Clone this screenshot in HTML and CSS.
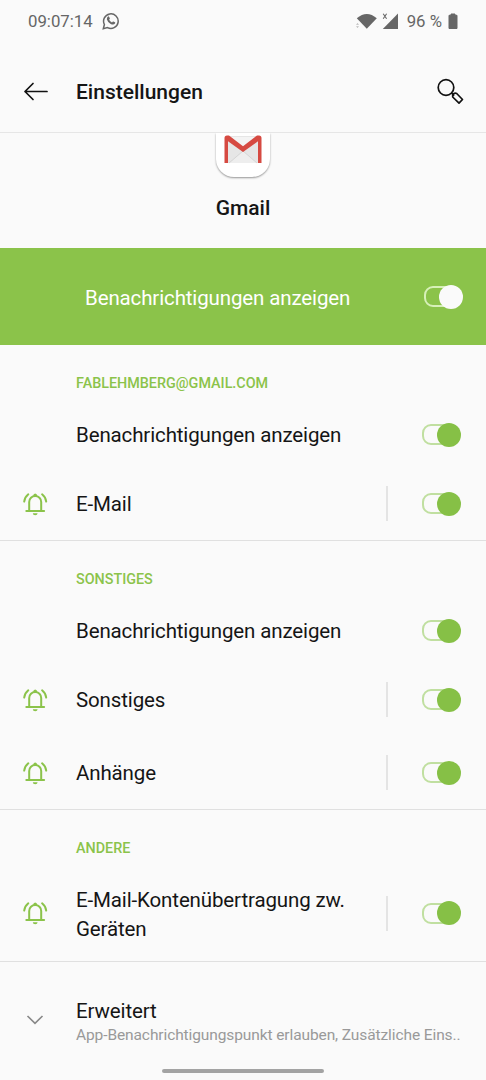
FILE: index.html
```html
<!DOCTYPE html>
<html lang="de">
<head>
  <meta charset="UTF-8" />
  <title>Einstellungen</title>
  <link rel="stylesheet" href="styles.css">
</head>
<body>
  <svg class="sprite">
    <symbol id="bell" viewBox="0 0 26 26">
      <g fill="none" stroke="currentColor" stroke-width="2" stroke-linecap="round">
        <path d="M4.300 20h17.800" />
        <path d="M7.200 19.500V11a6 6 0 0 1 12 0v8.500" />
        <path d="M6.300 3.300Q2.700 6.200 2.200 10.600" />
        <path d="M20.100 3.300Q23.700 6.200 24.200 10.600" />
      </g>
      <path d="M11.200 5a2 2.500 0 0 1 4 0zM10.800 22.200h4.800a2.400 2 0 0 1-4.800 0z" fill="currentColor" />
    </symbol>
  </svg>

  <div class="status-bar">
    <span class="clock">09:07:14</span>
    <svg class="whatsapp" width="18" height="18" viewBox="0 0 18 18">
      <path d="M1.300 16.700l1.100-4.200A7.300 7.300 0 1 1 5.500 15.600z" fill="none" stroke="#666" stroke-width="1.500" />
      <path d="M5.700 4.700q.9-.9 1.500.2l.7 1.600q0 .6-.8 1.300.9 1.800 2.900 2.600.9-1.200 1.400-.9l1.600.8q.5.400 0 1.200-1.400 1.900-4.300.4Q5.600 10.200 4.900 7.500q-.2-1.700.8-2.800z" fill="#666" />
    </svg>
    <div class="status-icons">
      <svg width="22" height="17" viewBox="0 0 22 17">
        <path d="M.8 5.200Q10.800-3.400 20.800 5.200L10.800 15.800z" fill="#666" />
        <path d="M0 11.700l1.500-1.700 1.500 1.700zM0 13.300l1.500 1.700 1.500-1.700z" fill="#bbb" />
      </svg>
      <svg width="17" height="17" viewBox="0 0 17 17">
        <path d="M16 .5V16H.8z" fill="#666" />
        <path d="M1.200.8l3.400 5M4.600.8l-3.400 5" stroke="#666" stroke-width="1.100" />
      </svg>
      <span class="percent">96 %</span>
      <svg width="10" height="17" viewBox="0 0 10 17">
        <path d="M3 1h4v1.300h2V15.500H1V2.300h2z" fill="#666" stroke="#666" stroke-linejoin="round" />
      </svg>
    </div>
  </div>

  <header class="toolbar">
    <svg width="26" height="20" viewBox="0 0 26 20" fill="none" stroke="#111" stroke-width="1.700" stroke-linecap="round" stroke-linejoin="round">
      <path d="M24 9.500H2M10 1.500L2 9.500l8 8" />
    </svg>
    <h1>Einstellungen</h1>
    <svg class="search" width="28" height="28" viewBox="0 0 28 28" fill="none" stroke="#111" stroke-width="1.700" stroke-linejoin="round">
      <circle cx="10" cy="9.500" r="7.800" />
      <path d="M15.500 15l2.700 2.700M16.700 19v-2.500q1.800-2.200 4-1l5.800 6-3.500 3.600z" />
    </svg>
  </header>

  <div class="app">
    <div class="app-icon">
      <svg width="38" height="29" viewBox="0 0 38 29">
        <path d="M2 1h34v27H2z" fill="#e6e6e6" />
        <path d="M5 28L19 16l14 12z" fill="#eee" />
        <path d="M4 2h30L19 14z" fill="#f4f4f4" />
        <path d="M5 28l14-12M33 28L19 16" stroke="#d5d5d5" fill="none" />
        <path d="M.5 3q0-2.500 2.500-2.500h2L19 11.300 33 .5h2q2.500 0 2.500 2.500v25H34V6.300L19 17 4 6.300V28H.5z" fill="#d64a42" />
      </svg>
    </div>
    <div class="app-name">Gmail</div>
  </div>

  <div class="banner">
    <span>Benachrichtigungen anzeigen</span>
    <div class="switch light"><i></i></div>
  </div>

  <section>
    <h2>FABLEHMBERG@GMAIL.COM</h2>
    <div class="row first">
      <span class="label">Benachrichtigungen anzeigen</span>
      <div class="switch"><i></i></div>
    </div>
    <div class="row">
      <svg class="bell"><use href="#bell" /></svg>
      <span class="label">E-Mail</span>
      <div class="separator"></div>
      <div class="switch"><i></i></div>
    </div>
  </section>

  <section>
    <h2>SONSTIGES</h2>
    <div class="row first">
      <span class="label">Benachrichtigungen anzeigen</span>
      <div class="switch"><i></i></div>
    </div>
    <div class="row">
      <svg class="bell"><use href="#bell" /></svg>
      <span class="label">Sonstiges</span>
      <div class="separator"></div>
      <div class="switch"><i></i></div>
    </div>
    <div class="row">
      <svg class="bell"><use href="#bell" /></svg>
      <span class="label">Anhänge</span>
      <div class="separator"></div>
      <div class="switch"><i></i></div>
    </div>
  </section>

  <section>
    <h2>ANDERE</h2>
    <div class="row tall">
      <svg class="bell"><use href="#bell" /></svg>
      <span class="label">E-Mail-Kontenübertragung zw. Geräten</span>
      <div class="separator"></div>
      <div class="switch"><i></i></div>
    </div>
  </section>

  <div class="advanced">
    <svg width="18" height="10" viewBox="0 0 18 10">
      <path d="M1.500 1L9 8.300 16.500 1" fill="none" stroke="#888" stroke-width="1.600" />
    </svg>
    <div>
      <div class="advanced-title">Erweitert</div>
      <div class="summary">App-Benachrichtigungspunkt erlauben, Zusätzliche Eins..</div>
    </div>
  </div>
  <div class="nav-handle"></div>
</body>
</html>
```
FILE: styles.css
```css
* { box-sizing: border-box; }
body { margin: 0; height: 1080px; overflow: hidden; display: flex; flex-direction: column; background: #fafafa; color: #151515; font-family: Roboto, sans-serif; font-size: 20.5px; letter-spacing: -.13px; }
svg { flex: none; display: block; }
h1, h2 { margin: 0; font-weight: 500; letter-spacing: 0; }
.sprite { width: 0; height: 0; }

.status-bar { height: 42px; flex: none; display: flex; align-items: center; padding: 0 28px; color: #666; font-size: 16.8px; letter-spacing: 0; }
.whatsapp { margin-left: 9px; }
.status-icons { display: flex; align-items: center; margin-left: auto; }
.status-icons svg + svg { margin-left: 4px; }
.percent { margin: 0 6px 0 8px; }

.toolbar { height: 91px; flex: none; display: flex; align-items: center; padding: 9px 22px 0 23px; border-bottom: 1px solid #e6e6e6; }
.toolbar h1 { margin-left: 27px; font-size: 21px; }
.search { margin-left: auto; }

.app { height: 115px; flex: none; display: flex; flex-direction: column; align-items: center; }
.app-icon { width: 54px; height: 44px; display: flex; justify-content: center; padding-top: 2px; background: #fff; border-radius: 0 0 18px 18px; box-shadow: 0 1px 2px rgba(0, 0, 0, .4); clip-path: inset(0 -4px -4px -4px); }
.app-name { margin-top: 19px; line-height: 24px; font-size: 21px; font-weight: 500; letter-spacing: 0; }

.banner { height: 97px; flex: none; display: flex; align-items: center; justify-content: space-between; padding: 0 23px 0 85px; background: #8bc34a; color: #fff; }
.banner span { padding-top: 2px; }

.switch { position: relative; flex: none; width: 39px; height: 24px; display: flex; align-items: center; }
.switch::before { content: ""; width: 32px; height: 17px; border: 2px solid #c0dfa0; border-radius: 9px; }
.switch i { position: absolute; right: 0; top: 0; width: 24px; height: 24px; border-radius: 50%; background: #86c046; }
.switch.light::before { border-color: #d7f0b8; }
.switch.light i { background: #fafafa; }

section { flex: none; border-bottom: 1px solid #e0e0e0; }
h2 { height: 57px; padding: 29px 0 0 76px; line-height: 20px; font-size: 14.35px; color: #8bc34a; }
.row { height: 73px; display: flex; align-items: center; padding: 0 25px 0 22px; }
.row.first { height: 65px; padding-left: 76px; }
.row.tall { height: 94px; padding-bottom: 2px; }
.bell { width: 26px; height: 26px; margin-right: 28px; color: #8bc34a; }
.label { flex: 1; padding-top: 2px; line-height: 29px; }
.tall .label { padding-top: 4px; }
.separator { width: 2px; height: 35px; margin: 0 34px 0 20px; background: #e4e4e4; }

.advanced { height: 118px; flex: none; display: flex; align-items: center; padding-left: 26px; }
.advanced svg { margin-bottom: 2px; }
.advanced > div { margin-left: 32px; padding-top: 2px; }
.advanced-title { line-height: 26px; }
.summary { line-height: 22px; font-size: 15.5px; letter-spacing: -.1px; color: #999; white-space: nowrap; }
.nav-handle { position: absolute; left: 162px; top: 1069px; width: 162px; height: 4px; border-radius: 2px; background: #a3a3a3; }
```
